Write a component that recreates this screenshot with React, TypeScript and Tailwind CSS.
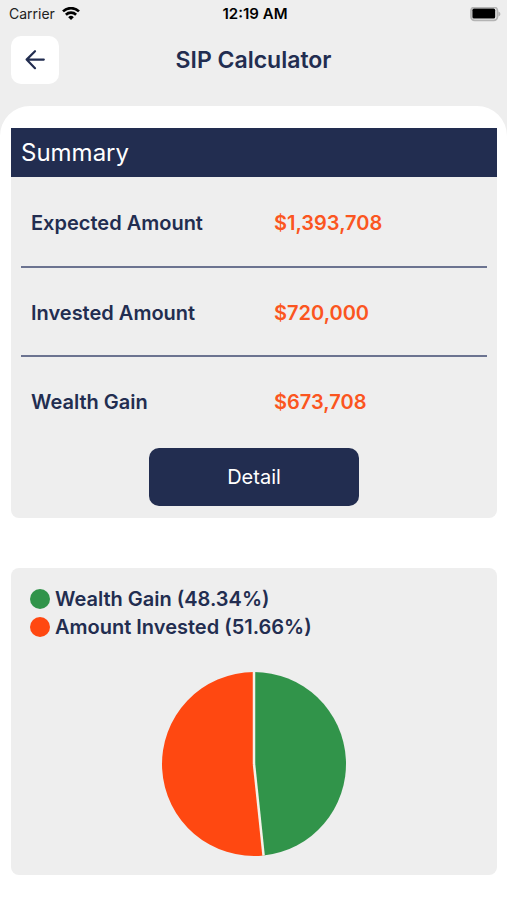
import clsx from "clsx";

type SummaryItem = {
  label: string;
  value: string;
};

type Slice = {
  label: string;
  percent: number;
  dot: string;
  fill: string;
};

const summary: SummaryItem[] = [
  { label: "Expected Amount", value: "$1,393,708" },
  { label: "Invested Amount", value: "$720,000" },
  { label: "Wealth Gain", value: "$673,708" },
];

const slices: Slice[] = [
  { label: "Wealth Gain", percent: 48.34, dot: "bg-[#31944a]", fill: "fill-[#31944a]" },
  { label: "Amount Invested", percent: 51.66, dot: "bg-[#ff4811]", fill: "fill-[#ff4811]" },
];

const StatusBar = () => (
  <div className="grid grid-cols-3 items-center h-7 pl-[9px] pr-1.5 text-black">
    <div className="flex items-center gap-[7px] text-sm text-[#222]">
      Carrier
      <svg viewBox="0 0 18 14" className="w-[18px] h-[14px]" fill="none" stroke="#000" strokeWidth="2.6" aria-label="Wi-Fi">
        <path d="M1 4.4a11.4 11.4 0 0 1 16 0" />
        <path d="M3.9 7.7a7.3 7.3 0 0 1 10.2 0" />
        <path d="M9 13 6.2 10.2a4 4 0 0 1 5.6 0z" fill="#000" stroke="none" />
      </svg>
    </div>
    <div className="text-center text-[15px] leading-5 font-semibold">12:19 AM</div>
    <svg viewBox="0 0 31 15" className="justify-self-end w-[31px] h-[15px]" aria-label="Battery full">
      <rect x="1" y="0.2" width="26.4" height="13.2" rx="3.6" fill="#eee" stroke="#b4b4b4" strokeWidth="1.8" />
      <rect x="2.4" y="1.6" width="22.8" height="10" rx="1.6" fill="#000" />
      <path d="M28.4 4.4c2.6.8 2.6 4.2 0 5z" fill="#b4b4b4" />
    </svg>
  </div>
);

const Header = () => (
  <header className="grid grid-cols-[48px_1fr_48px] items-center px-[11px] pt-2 pb-[22px]">
    <button type="button" aria-label="Back" className="flex items-center justify-center size-12 rounded-[10px] bg-white">
      <svg viewBox="0 0 24 24" className="size-6" fill="none" stroke="#222d50" strokeWidth="2.2" strokeLinecap="round" strokeLinejoin="round">
        <path d="M20.8 11.6H3.6M12 3.2 3.6 11.6l8.4 8.6" />
      </svg>
    </button>
    <h1 className="text-center text-[23px] leading-7 font-semibold">SIP Calculator</h1>
  </header>
);

const SummaryCard = () => (
  <section className="rounded-b-lg bg-[#eee] pb-3">
    <h2 className="bg-[#222d50] px-2.5 text-2xl leading-[49px] text-white">Summary</h2>
    <div className="px-2.5 pt-px">
      <table className="w-full border-collapse text-left text-xl font-semibold">
        <tbody>
          {summary.map((item, index) => (
            <tr key={item.label} className={clsx("h-[89px]", index < summary.length - 1 && "border-b-2 border-[#6b7390]")}>
              <th scope="row" className="w-1/2 pt-0.5 pl-2.5 font-semibold">{item.label}</th>
              <td className="w-1/2 pt-0.5 pl-5 text-[#fb5520]">{item.value}</td>
            </tr>
          ))}
        </tbody>
      </table>
    </div>
    <button type="button" className="block mx-auto mt-[3px] h-[58px] w-[210px] rounded-[10px] bg-[#222d50] text-xl text-white">
      Detail
    </button>
  </section>
);

const RADIUS = 92;

const pointAt = (percent: number) => {
  const angle = (percent / 100) * 2 * Math.PI;
  return `${RADIUS * Math.sin(angle)} ${-RADIUS * Math.cos(angle)}`;
};

const PieChart = () => (
  <svg viewBox="-93 -93 186 186" className="block mx-auto size-[186px]" role="img" aria-label="Wealth gain and amount invested">
    {slices.map((slice, index) => {
      const start = slices.slice(0, index).reduce((sum, s) => sum + s.percent, 0);
      const end = start + slice.percent;
      return (
        <path
          key={slice.label}
          d={`M0 0L${pointAt(start)}A${RADIUS} ${RADIUS} 0 ${slice.percent > 50 ? 1 : 0} 1 ${pointAt(end)}Z`}
          className={slice.fill}
        />
      );
    })}
    {slices.map((slice, index) => (
      <path
        key={slice.label}
        d={`M0 0L${pointAt(index === 0 ? 0 : slices[0].percent)}`}
        className="stroke-[#f4f1e8] stroke-[2.5]"
      />
    ))}
  </svg>
);

const ChartCard = () => (
  <section className="rounded-lg bg-[#eee] pt-[17px] pb-[18px]">
    <ul className="px-[19px] pb-[30px] text-xl leading-7 font-semibold">
      {slices.map((slice) => (
        <li key={slice.label} className="flex items-center gap-[5px]">
          <span className={clsx("size-5 rounded-full", slice.dot)} />
          {slice.label} ({slice.percent}%)
        </li>
      ))}
    </ul>
    <PieChart />
  </section>
);

const App = () => {
  return (
    <div className="min-h-screen flex flex-col bg-[#eee] font-['Inter','Liberation_Sans',sans-serif] text-[#222d50]">
      <StatusBar />
      <Header />
      <main className="flex-1 flex flex-col gap-[50px] rounded-t-[30px] bg-white pl-[11px] pr-2.5 pt-[22px] pb-6">
        <SummaryCard />
        <ChartCard />
      </main>
    </div>
  );
};

export default App;
